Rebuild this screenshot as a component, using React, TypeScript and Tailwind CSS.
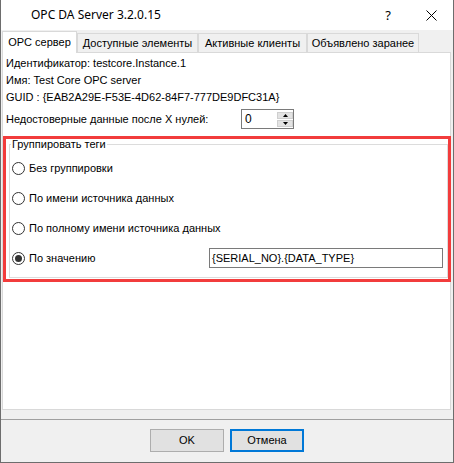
import React from "react";

function Radio({ checked }: { checked?: boolean }) {
  return (
    <span className="w-[13px] h-[13px] rounded-full border border-[#333333] bg-white flex items-center justify-center shrink-0">
      {checked ? <span className="w-[7px] h-[7px] rounded-full bg-[#333333]" /> : null}
    </span>
  );
}

function RadioRow({ label, checked }: { label: string; checked?: boolean }) {
  return (
    <div className="h-[30px] flex items-center pl-[2px]">
      <Radio checked={checked} />
      <span className="ml-[4px] leading-[13px]">{label}</span>
    </div>
  );
}

function Tab({ label, w, selected }: { label: string; w: string; selected?: boolean }) {
  if (selected) {
    return (
      <div className={`${w} h-[22px] bg-white border-l border-t border-r border-[#d9d9d9] relative z-10 flex items-center justify-center pb-[1px]`}>
        {label}
      </div>
    );
  }
  return (
    <div className={`${w} h-[19px] mb-[1px] bg-[#f0f0f0] border-l border-t border-r border-[#d9d9d9] flex items-center justify-center`}>
      {label}
    </div>
  );
}

export default function App() {
  return (
    <div className="w-[454px] h-[463px] bg-[#f0f0f0] border-l border-r border-b border-[#6d6d6d] flex flex-col font-['Liberation_Sans',Arial,sans-serif] text-[11px] text-black leading-[13px]">
      {/* Title bar */}
      <div className="h-[30px] bg-white flex items-center shrink-0">
        <span className="pl-[30px] text-[12px] font-['Noto_Sans',sans-serif] leading-[16px]">OPC DA Server 3.2.0.15</span>
        <span className="ml-auto text-[13px] font-['Noto_Sans',sans-serif] leading-[16px]">?</span>
        <svg className="ml-[35px] mr-[16px]" width="11" height="11" viewBox="0 0 11 11">
          <path d="M0.5 0.5 L10.5 10.5 M10.5 0.5 L0.5 10.5" stroke="#000" strokeWidth="1" fill="none" />
        </svg>
      </div>

      {/* Tabs */}
      <div className="h-[23px] -mb-[1px] flex items-end pl-[1px] shrink-0">
        <Tab label="OPC сервер" w="w-[75px]" selected />
        <Tab label="Доступные элементы" w="w-[121px]" />
        <Tab label="Активные клиенты" w="w-[109px]" />
        <Tab label="Объявлено заранее" w="w-[112px]" />
      </div>

      {/* Panel */}
      <div className="ml-[1px] w-[449px] h-[358px] bg-white border border-[#d9d9d9] shrink-0">
        <div className="pl-[3px] pt-[2px]">
          <div className="leading-[17px]">Идентификатор: testcore.Instance.1</div>
          <div className="leading-[17px]">Имя: Test Core OPC server</div>
          <div className="leading-[17px]">GUID : {"{EAB2A29E-F53E-4D62-84F7-777DE9DFC31A}"}</div>
          <div className="mt-[3px] h-[20px] flex items-center">
            <span className="w-[235px]">Недостоверные данные после X нулей:</span>
            <div className="w-[53px] h-[20px] border border-[#7a7a7a] bg-white flex">
              <span className="pl-[3px] flex-1 leading-[18px] text-[12px]">0</span>
              <div className="flex flex-col pt-[2px] gap-[1px]">
                <div className="w-[16px] h-[7px] bg-[#e3e3e3] border border-[#cfcfcf] flex items-center justify-center">
                  <svg width="5" height="3" viewBox="0 0 5 3"><path d="M2.5 0 L5 3 L0 3 Z" fill="#000" /></svg>
                </div>
                <div className="w-[16px] h-[7px] bg-[#e3e3e3] border border-[#cfcfcf] flex items-center justify-center">
                  <svg width="5" height="3" viewBox="0 0 5 3"><path d="M0 0 L5 0 L2.5 3 Z" fill="#000" /></svg>
                </div>
              </div>
            </div>
          </div>
        </div>

        {/* Red highlighted group */}
        <div className="mt-[7px] w-[448px] h-[146px] border-[3px] border-[#f23c3c]">
          <fieldset className="ml-[3px] w-[439px] border border-[#dcdcdc] pt-[3px] pb-[4px]">
            <legend className="ml-[1px] px-[1px] leading-[11px]">Группировать теги</legend>
            <RadioRow label="Без группировки" />
            <RadioRow label="По имени источника данных" />
            <RadioRow label="По полному имени источника данных" />
            <div className="h-[30px] flex items-center">
              <div className="w-[199px] flex items-center pl-[2px]">
                <Radio checked />
                <span className="ml-[4px]">По значению</span>
              </div>
              <div className="w-[234px] h-[20px] border border-[#7a7a7a] bg-white flex items-center pl-[2px]">
                {"{SERIAL_NO}.{DATA_TYPE}"}
              </div>
            </div>
          </fieldset>
        </div>
      </div>

      {/* Separator */}
      <div className="h-[9px] shrink-0" />
      <div className="h-[1px] bg-[#a0a0a0] shrink-0" />

      {/* Buttons */}
      <div className="flex-1 flex justify-center gap-[6px] pt-[9px]">
        <div className="w-[74px] h-[23px] bg-[#e1e1e1] border border-[#adadad] flex items-center justify-center">OK</div>
        <div className="w-[74px] h-[23px] bg-[#e1e1e1] border-2 border-[#0078d7] flex items-center justify-center">Отмена</div>
      </div>
    </div>
  );
}
